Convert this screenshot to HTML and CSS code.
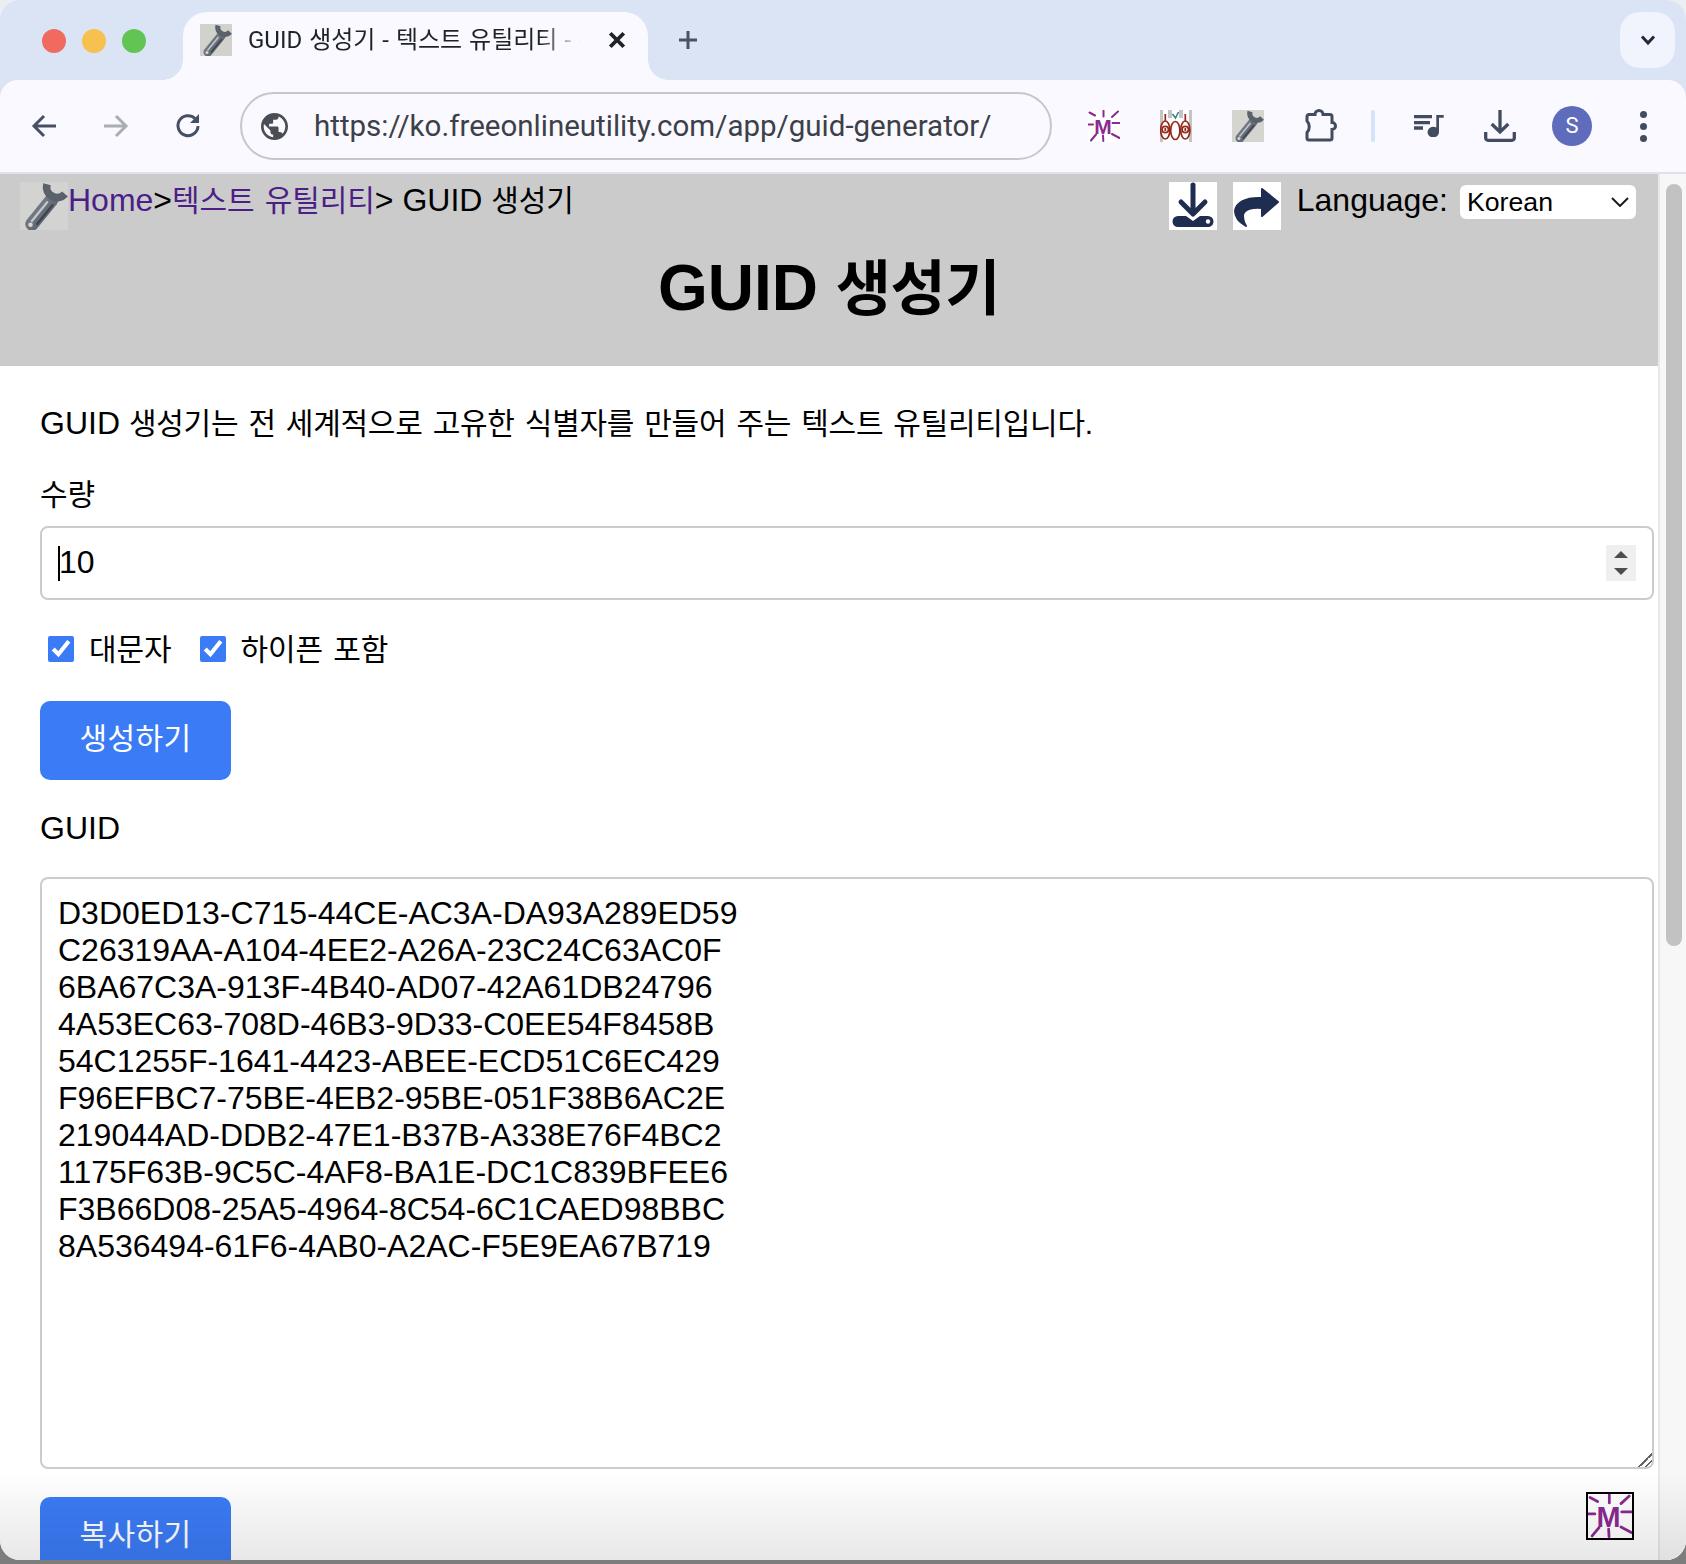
FILE: index.html
```html
<!DOCTYPE html>
<html lang="ko">
<head>
<meta charset="utf-8">
<title>GUID 생성기 - 텍스트 유틸리티</title>
<link rel="stylesheet" href="styles.css">
</head>
<body>
<svg class="defs" width="0" height="0" aria-hidden="true">
  <defs>
    <linearGradient id="steel" x1="0" y1="0" x2="1" y2="1">
      <stop offset="0" stop-color="#7f8690"/>
      <stop offset="1" stop-color="#525964"/>
    </linearGradient>
    <symbol id="wrench" viewBox="0 0 32 32">
      <path d="M21 12 L8 28" stroke="url(#steel)" stroke-width="9" stroke-linecap="round" fill="none"/>
      <path d="M18.500 13 L7.500 26.500" stroke="#c3c8ce" stroke-width="1.500" fill="none"/>
      <path d="M22 15 L11 28.500" stroke="#3f454f" stroke-width="1.500" fill="none"/>
      <path d="M18 1.500 A7 7 0 0 0 30 8" stroke="#5a616b" stroke-width="5.200" fill="none"/>
      <circle cx="7" cy="28.500" r="1.500" fill="#d8d8d2"/>
    </symbol>
    <symbol id="mlogo" viewBox="0 0 32 32">
      <rect width="32" height="32" fill="#fff"/>
      <g stroke="#8a2a92" stroke-width="2" fill="none" stroke-linecap="round">
        <path d="M15.500 0.500V6.500M1.500 2.500L7 5.500M30 1.500L24 7M0.500 14.500H5M24.500 13H31.500M3 30.500L8 24.500M15 25.500L15.300 31M24 24L31.500 28"/>
      </g>
      <text x="15" y="24" class="mletter">M</text>
    </symbol>
  </defs>
</svg>

<div class="window">
  <header class="tabstrip">
    <div class="lights"><i class="light red"></i><i class="light yellow"></i><i class="light green"></i></div>
    <div class="tab">
      <svg class="fav" viewBox="0 0 32 32"><use href="#wrench"/></svg>
      <span class="tabtitle">GUID 생성기 - 텍스트 유틸리티 - 무료 온라인</span>
      <svg class="tabclose" viewBox="0 0 16 16"><path d="M2 2L14 14M14 2L2 14"/></svg>
    </div>
    <svg class="newtab" viewBox="0 0 20 20"><path d="M10 1V19M1 10H19"/></svg>
    <div class="tabsearch"><svg viewBox="0 0 16 10"><path d="M2 1.500L8 8L14 1.500"/></svg></div>
  </header>

  <nav class="toolbar">
    <svg class="nav back" viewBox="0 0 28 28"><path d="M25 14H4M13 4L3 14L13 24"/></svg>
    <svg class="nav fwd" viewBox="0 0 28 28"><path d="M3 14H24M15 4L25 14L15 24"/></svg>
    <svg class="nav reload" viewBox="0 0 28 28"><path d="M23 14A10 10 0 1 1 20 6.500"/><path class="fill" d="M24 2V11H15Z"/></svg>
    <div class="omnibox">
      <svg class="globe" viewBox="2 2 20 20"><path d="M12 2C6.480 2 2 6.480 2 12s4.480 10 10 10 10-4.480 10-10S17.520 2 12 2zm-1 17.930c-3.950-.490-7-3.850-7-7.930 0-.620.080-1.210.210-1.790L9 15v1c0 1.100.900 2 2 2v1.930zm6.900-2.540c-.260-.810-1-1.390-1.900-1.390h-1v-3c0-.550-.450-1-1-1H8v-2h2c.550 0 1-.450 1-1V7h2c1.100 0 2-.900 2-2v-.410c2.930 1.190 5 4.060 5 7.410 0 2.080-.800 3.970-2.100 5.390z"/></svg>
      <span class="url">https://ko.freeonlineutility.com/app/guid-generator/</span>
    </div>
    <div class="exts">
      <svg class="ext" viewBox="0 0 32 32"><use href="#mlogo"/></svg>
      <svg class="ext" viewBox="0 0 32 32">
        <rect width="32" height="32" fill="#fff"/>
        <path d="M0 0H3V32H0ZM8 0H12V8H8ZM19 0H23V8H19ZM29 0H32V32H29Z" fill="#c4c4c4"/>
        <path d="M12.500 4L15.500 8L18.500 2" stroke="#3f7f86" stroke-width="1.600" fill="none"/>
        <g fill="#fff" stroke="#96281c" stroke-width="1.700">
          <ellipse cx="5.300" cy="20" rx="4.600" ry="9"/><ellipse cx="15.300" cy="20.500" rx="4.600" ry="9"/><ellipse cx="25.300" cy="20" rx="4.600" ry="9"/>
          <circle cx="5.300" cy="19.500" r="3.200"/><circle cx="25.300" cy="19.500" r="3.200"/>
          <path d="M5.300 4V11M25.300 4V11M5.300 18V21M25.300 18V21"/>
        </g>
      </svg>
      <svg class="ext" viewBox="0 0 32 32"><rect width="32" height="32" fill="#d5d5cf"/><use href="#wrench"/></svg>
      <svg class="puzzle" viewBox="0 0 34 34"><path d="M3 7.500A2 2 0 0 1 5 5.500H11A4 4 0 0 1 19 5.500H26A2 2 0 0 1 28 7.500V13.500A3.500 3.500 0 0 1 28 20.500V29A2 2 0 0 1 26 31H5A2 2 0 0 1 3 29V23.500C6 20.500 6 15 3 12Z"/></svg>
      <i class="vsep"></i>
      <svg class="media" viewBox="0 0 30 22"><path d="M0 0H18V3.300H0ZM0 6H16V9.300H0ZM0 11.300H9V14.700H0ZM22.300 0H29.700V2.700H25V16.700A5.700 5.300 0 1 1 22.300 12.600Z"/></svg>
      <svg class="dl" viewBox="0 0 32 32"><path d="M16 0V21M7.700 14L16 22L24.300 14M1.700 22V28A2.300 2.300 0 0 0 4 30.300H28A2.300 2.300 0 0 0 30.300 28V22"/></svg>
      <div class="avatar">S</div>
      <div class="kebab"><i></i><i></i><i></i></div>
    </div>
  </nav>

  <div class="viewport">
    <div class="page">
      <section class="hero">
        <div class="toprow">
          <div class="crumbs">
            <svg class="crumbicon" viewBox="0 0 32 32"><rect width="32" height="32" fill="#d3d3d1"/><use href="#wrench"/></svg>
            <a class="crumb" href="#">Home</a><span>&gt;</span><a class="crumb ko" href="#">텍스트 유틸리티</a><span>&gt; GUID <span class="ko">생성기</span></span>
          </div>
          <div class="tools">
            <svg class="toolimg" viewBox="0 0 48 48"><rect width="48" height="48" fill="#fff"/><path class="navyline" d="M24 3V29M12 20L24 32L36 20"/><path class="navy" d="M9 34H17L24 39L31 34H39A5.500 5.500 0 0 1 39 45H9A5.500 5.500 0 0 1 9 34Z"/><circle cx="39" cy="39.500" r="2.200" fill="#fff"/></svg>
            <svg class="toolimg" viewBox="0 0 48 48"><rect width="48" height="48" fill="#fff"/><path class="navy round" d="M29 7L45 20L29 34V26C20 25 11 27 10 33C10 37 11 41 13 44C6 40 2 34 2 29C3 21 12 15 29 16Z"/></svg>
            <label class="langlabel" for="lang">Language:</label>
            <div class="selectwrap">
              <select id="lang" class="lang"><option>Korean</option></select>
              <svg class="selectarrow" viewBox="0 0 18 10"><path d="M1 1L9 9L17 1"/></svg>
            </div>
          </div>
        </div>
        <h1 class="title">GUID <span>생성기</span></h1>
      </section>

      <main class="content">
        <p class="intro">GUID <span class="ko">생성기는 전 세계적으로 고유한 식별자를 만들어 주는 텍스트 유틸리티입니다.</span></p>
        <div class="fieldlabel ko gapq">수량</div>
        <div class="numinput"><i class="caret"></i><span class="numval">10</span>
          <div class="spin"><i class="up"></i><i class="down"></i></div>
        </div>
        <div class="options">
          <label class="opt"><input type="checkbox" checked><span class="ko">대문자</span></label>
          <label class="opt"><input type="checkbox" checked><span class="ko">하이픈 포함</span></label>
        </div>
        <button class="btn gen"><span class="ko">생성하기</span></button>
        <div class="fieldlabel guidlabel">GUID</div>
        <textarea class="output" readonly>D3D0ED13-C715-44CE-AC3A-DA93A289ED59
C26319AA-A104-4EE2-A26A-23C24C63AC0F
6BA67C3A-913F-4B40-AD07-42A61DB24796
4A53EC63-708D-46B3-9D33-C0EE54F8458B
54C1255F-1641-4423-ABEE-ECD51C6EC429
F96EFBC7-75BE-4EB2-95BE-051F38B6AC2E
219044AD-DDB2-47E1-B37B-A338E76F4BC2
1175F63B-9C5C-4AF8-BA1E-DC1C839BFEE6
F3B66D08-25A5-4964-8C54-6C1CAED98BBC
8A536494-61F6-4AB0-A2AC-F5E9EA67B719</textarea>
        <button class="btn copy"><span class="ko">복사하기</span></button>
      </main>
    </div>
    <div class="scrolltrack"><div class="thumb"></div></div>
    <svg class="floatlogo" viewBox="0 0 32 32"><use href="#mlogo"/></svg>
    <div class="shade"></div>
  </div>
</div>
</body>
</html>
```
FILE: styles.css
```css
* { box-sizing: border-box; }
html, body { margin: 0; height: 1564px; overflow: hidden; }
body {
  background: linear-gradient(#eceef2 0 60px, #7d7d7d 60px);
  font-family: "Liberation Sans", "Noto Sans CJK KR", sans-serif;
  font-size: 32px;
  line-height: 37px;
  color: #000;
}
.defs { position: absolute; }
.mletter { font: 700 21px "Liberation Sans", sans-serif; fill: #8a2a92; text-anchor: middle; }
.window {
  height: 1560px;
  background: #dbe4f5;
  border-radius: 20px;
  overflow: hidden;
  display: flex;
  flex-direction: column;
}

/* tab strip */
.tabstrip { height: 80px; flex: none; display: flex; align-items: flex-end; position: relative; }
.lights { display: flex; gap: 16px; margin-left: 42px; align-self: flex-start; margin-top: 29px; }
.light { width: 24px; height: 24px; border-radius: 50%; display: block; }
.red { background: #f06a5f; }
.yellow { background: #f6c14f; }
.green { background: #61c554; }
.tab {
  margin-left: 37px;
  width: 465px;
  height: 68px;
  background: #f9f9ff;
  border-radius: 24px 24px 0 0;
  position: relative;
  display: flex;
  align-items: center;
  padding: 0 0 12px 17px;
}
.tab::before, .tab::after { content: ""; position: absolute; bottom: 0; width: 20px; height: 20px; }
.tab::before { left: -20px; background: radial-gradient(circle at 0 0, transparent 19.5px, #f9f9ff 20px); }
.tab::after { right: -20px; background: radial-gradient(circle at 100% 0, transparent 19.5px, #f9f9ff 20px); }
.fav { width: 32px; height: 32px; flex: none; background: #d2d2cc; }
.tabtitle {
  margin-left: 16px;
  width: 340px;
  flex: none;
  font: 24px/30px Roboto, "Noto Sans CJK KR", sans-serif;
  word-spacing: 1px;
  color: #1f2229;
  white-space: nowrap;
  overflow: hidden;
  -webkit-mask-image: linear-gradient(90deg, #000 86%, transparent 98%);
  mask-image: linear-gradient(90deg, #000 86%, transparent 98%);
}
.tabclose { width: 18px; height: 18px; margin-left: 20px; fill: none; stroke: #1f2229; stroke-width: 3.400; flex: none; }
.newtab { width: 20px; height: 20px; margin: 0 0 30px 30px; fill: none; stroke: #4a5366; stroke-width: 3; flex: none; }
.tabsearch {
  margin-left: auto;
  margin-right: 11px;
  align-self: flex-start;
  margin-top: 12px;
  width: 55px;
  height: 56px;
  border-radius: 20px;
  background: #f1f4fd;
  display: flex;
  align-items: center;
  justify-content: center;
}
.tabsearch svg { width: 16px; height: 10px; fill: none; stroke: #1f2937; stroke-width: 3; }

/* toolbar */
.toolbar {
  height: 94px;
  flex: none;
  background: #f9f9ff;
  border-radius: 18px 18px 0 0;
  border-bottom: 2px solid #dfe2ec;
  display: flex;
  align-items: center;
  position: relative;
}
.nav { width: 28px; height: 28px; flex: none; fill: none; stroke-width: 3; }
.nav .fill { fill: #475062; stroke: none; }
.back { margin-left: 31px; stroke: #475062; }
.fwd { margin-left: 42px; stroke: #a9adb6; }
.reload { margin-left: 46px; stroke: #475062; }
.omnibox {
  margin-left: 37px;
  width: 812px;
  height: 68px;
  border: 2px solid #c6c7cd;
  border-radius: 34px;
  display: flex;
  align-items: center;
  flex: none;
}
.globe { width: 27px; height: 27px; margin-left: 19px; fill: #4a4d55; flex: none; }
.url { margin-left: 26px; font: 29.500px/36px Roboto, sans-serif; color: #3c4048; white-space: nowrap; }
.exts { display: flex; align-items: center; margin-left: 36px; height: 100%; }
.ext { width: 32px; height: 32px; margin-right: 40px; flex: none; }
.puzzle { width: 34px; height: 34px; margin-left: 0; fill: none; stroke: #424c60; stroke-width: 3; flex: none; }
.vsep { width: 4px; height: 32px; border-radius: 2px; background: #d5e2fa; margin-left: 33px; flex: none; }
.media { width: 30px; height: 22px; margin-left: 39px; fill: #424c60; flex: none; }
.dl { width: 32px; height: 32px; margin-left: 40px; fill: none; stroke: #424c60; stroke-width: 3.300; flex: none; }
.avatar {
  width: 40px; height: 40px; margin-left: 36px; border-radius: 50%;
  background: #5f6bbb; color: #fff;
  font: 22px/40px Roboto, sans-serif; text-align: center; flex: none;
}
.kebab { display: flex; flex-direction: column; gap: 5px; margin-left: 48px; flex: none; }
.kebab i { width: 7px; height: 7px; border-radius: 50%; background: #424c60; display: block; }

/* page */
.viewport { flex: 1; min-height: 0; display: flex; position: relative; background: #fff; }
.page { flex: 1; min-width: 0; }
.hero { height: 192px; background: #cbcbcb; padding-top: 8px; }
.toprow { display: flex; justify-content: space-between; padding: 0 22px 0 20px; }
.crumbs { display: flex; align-items: flex-start; height: 48px; }
.crumbicon { width: 48px; height: 48px; flex: none; }
.crumb { color: #4b1f87; text-decoration: none; }
.tools { display: flex; align-items: flex-start; }
.toolimg { width: 48px; height: 48px; margin-right: 16px; flex: none; }
.navy { fill: #1f2d50; }
.navy.round { stroke: #1f2d50; stroke-width: 2; stroke-linejoin: round; }
.navyline { fill: none; stroke: #1f2d50; stroke-width: 5; stroke-linecap: round; stroke-linejoin: round; }
.langlabel { margin-right: 12px; line-height: 37px; }
.selectwrap { position: relative; margin-top: 3px; }
.lang {
  appearance: none;
  display: block;
  width: 176px;
  height: 34px;
  border: 0;
  border-radius: 6px;
  background: #fff;
  padding: 0 0 0 7px;
  font: 26.670px "Liberation Sans", sans-serif;
  color: #000;
}
.selectarrow {
  position: absolute; right: 7px; top: 12px; width: 18px; height: 10px;
  fill: none; stroke: #1c1c1c; stroke-width: 2; pointer-events: none;
}
.title {
  margin: 21px 0 0;
  text-align: center;
  font-size: 64px;
  line-height: 74px;
  font-weight: 700;
}
.title span { font-size: 60px; letter-spacing: -.5px; }
.ko { font-size: 30px; letter-spacing: -.1px; word-spacing: 2px; }

.content { padding: 39px 4px 0 40px; }
.intro { margin: 0; }
.intro .ko { letter-spacing: -.25px; }
.fieldlabel { height: 37px; }
.gapq { margin-top: 33px; padding-top: 1px; }
.numinput {
  margin-top: 14px;
  height: 74px;
  border: 2px solid #ccc;
  border-radius: 8px;
  display: flex;
  align-items: center;
  padding-left: 16px;
  padding-right: 16px;
}
.caret { width: 2px; height: 35px; background: #000; display: block; }
.numval { margin-left: -1px; padding-bottom: 2px; }
.spin {
  margin-left: auto;
  width: 30px; height: 36px;
  background: #efefef;
  display: flex; flex-direction: column; align-items: center; justify-content: center; gap: 10px;
}
.up, .down { display: block; width: 0; height: 0; border-left: 7px solid transparent; border-right: 7px solid transparent; }
.up { border-bottom: 7px solid #4d4d4d; }
.down { border-top: 7px solid #4d4d4d; }
.options { margin-top: 30px; padding-left: 8px; display: flex; gap: 28px; height: 37px; }
.opt { display: flex; align-items: center; gap: 15px; }
.opt .ko { padding-top: 2px; }
.opt input { width: 26px; height: 26px; margin: 0; accent-color: #3b7bf6; }
.btn {
  display: block;
  width: 191px;
  height: 79px;
  border: 0;
  border-radius: 10px;
  background: #3b7bf6;
  color: #fff;
  font-family: inherit;
  text-align: center;
  padding: 0 0 9px;
}
.btn .ko { letter-spacing: .4px; }
.gen { margin-top: 34px; }
.guidlabel { margin-top: 30px; }
.output {
  display: block;
  margin-top: 30px;
  width: 100%;
  height: 592px;
  border: 2px solid #ccc;
  border-radius: 8px;
  padding: 16px;
  font: 32px/37px "Liberation Sans", sans-serif;
  color: #000;
  background: #fff;
  outline: 0;
}
.output::-webkit-resizer {
  background: linear-gradient(135deg, transparent 52%, #666 52%, #666 60%, transparent 60%, transparent 74%, #666 74%, #666 82%, transparent 82%);
}
.copy { margin-top: 28px; }

.scrolltrack { width: 28px; flex: none; background: #f7f7f7; border-left: 2px solid #e8e8e8; padding: 10px 4px 0 6px; }
.thumb { height: 762px; background: #c2c2c2; border-radius: 8px; }
.floatlogo { position: absolute; left: 1586px; top: 1318px; width: 48px; height: 48px; border: 2px solid #000; background: #fff; }
.shade {
  position: absolute; left: 0; right: 0; bottom: 0; height: 90px;
  background: linear-gradient(rgba(0,0,0,0), rgba(0,0,0,.09));
  pointer-events: none;
}
```
